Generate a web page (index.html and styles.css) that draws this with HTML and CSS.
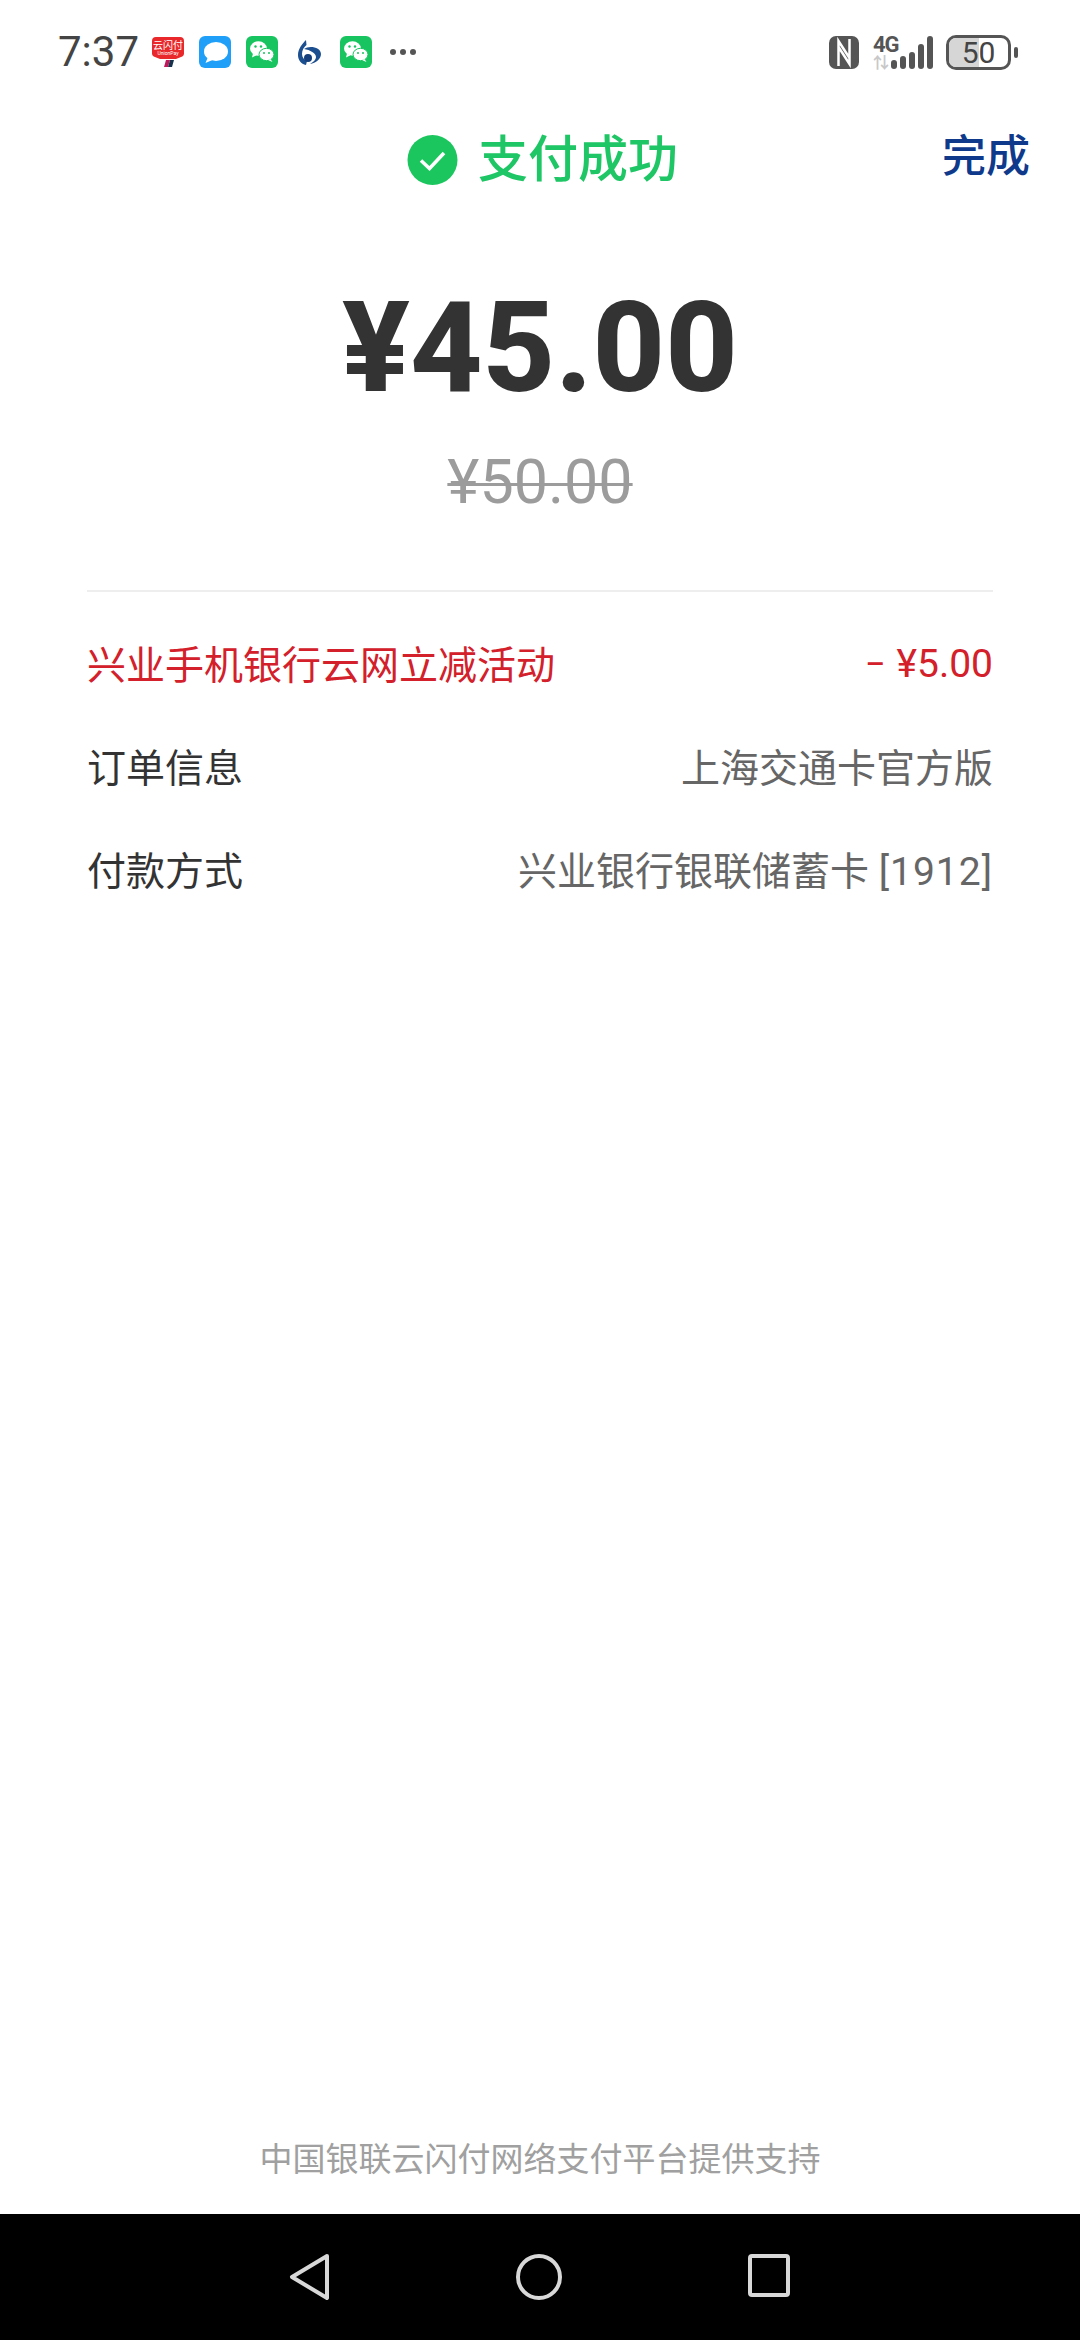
FILE: index.html
```html
<!DOCTYPE html>
<html lang="en">
<head>
    <meta charset="UTF-8">
    <title>支付成功</title>
    <link rel="stylesheet" href="styles.css">
</head>
<body>
    <svg class="defs" width="0" height="0">
        <symbol id="wechat" viewBox="0 0 32 32">
            <rect width="32" height="32" rx="6" fill="#17c45f"/>
            <ellipse cx="12.5" cy="12.5" rx="8.5" ry="7.2" fill="#fff"/>
            <path d="M7 17.500l-1 4 4.500-2.300z" fill="#fff"/>
            <ellipse cx="20.500" cy="18.500" rx="7.500" ry="6.200" fill="#fff" stroke="#17c45f" stroke-width="1"/>
            <path d="M24.500 23l2 3-4-1.800z" fill="#fff"/>
            <circle cx="9.500" cy="10.500" r="1.200" fill="#17c45f"/>
            <circle cx="15" cy="10.500" r="1.200" fill="#17c45f"/>
            <circle cx="18" cy="17" r="1" fill="#17c45f"/>
            <circle cx="23" cy="17" r="1" fill="#17c45f"/>
        </symbol>
    </svg>

    <div class="status-bar">
        <span class="time">7:37</span>
        <div class="notify-icons">
            <svg class="ico" width="32" height="30" viewBox="0 0 32 30">
                <path d="M4 0h24a4 4 0 0 1 4 4v12a4 4 0 0 1-3 4l-5 2H8l-5-2a4 4 0 0 1-3-4V4a4 4 0 0 1 4-4z" fill="#e8282a"/>
                <text x="16" y="12" class="yun-text">云闪付</text>
                <text x="16" y="18" class="yun-small">UnionPay</text>
                <path d="M12 30l2-7h4l-2 7z" fill="#c2185b"/>
                <path d="M16 30l2-7h4l-2 7z" fill="#17324d"/>
            </svg>
            <svg class="ico" width="32" height="32" viewBox="0 0 32 32">
                <rect width="32" height="32" rx="6" fill="#1f9ff7"/>
                <ellipse cx="17" cy="15.500" rx="12" ry="9.500" fill="#fff"/>
                <path d="M9 21l-2.500 6 7-3z" fill="#fff"/>
            </svg>
            <svg class="ico" width="32" height="32"><use href="#wechat"/></svg>
            <svg class="ico bank" width="24" height="25" viewBox="0 0 24 25">
                <path d="M9 0C5 4 1 9 1 15c0 5 3 9 8 10l1-4c-3-1-5-4-5-7 0-4 2-7 4.500-9z" fill="#1c4f8f"/>
                <path d="M7 9c5-4 17-2 17 5 0 5-5 9-11 10 3-2 6-4 6-7 0-4-6-7-12-8z" fill="#1c4f8f"/>
                <circle cx="11" cy="18" r="4" fill="#143f7c"/>
            </svg>
            <svg class="ico" width="32" height="32"><use href="#wechat"/></svg>
            <div class="more-dots"><i></i><i></i><i></i></div>
        </div>
        <div class="system-icons">
            <svg width="30" height="33" viewBox="0 0 30 33">
                <rect width="30" height="33" rx="7" fill="#555"/>
                <path d="M9.500 30V5l11 17M9.500 11l11 17V3" fill="none" stroke="#fff" stroke-width="2.500"/>
            </svg>
            <div class="net">
                <span class="net-label">4G</span>
                <span class="net-arrows">⇅</span>
            </div>
            <div class="signal">
                <i class="s1"></i><i class="s2"></i><i class="s3"></i><i class="s4"></i><i class="s5"></i>
            </div>
            <div class="battery">
                <div class="battery-body">
                    <div class="battery-fill"></div>
                    <span class="battery-num">50</span>
                </div>
                <div class="battery-nub"></div>
            </div>
        </div>
    </div>

    <div class="header">
        <div></div>
        <div class="result">
            <svg width="51" height="50" viewBox="0 0 51 50">
                <circle cx="25.500" cy="25" r="25" fill="#1cc65e"/>
                <path d="M14 25.500l8.500 8L37 18" fill="none" stroke="#fff" stroke-width="3.500"/>
            </svg>
            <span class="result-text">支付成功</span>
        </div>
        <div class="done">完成</div>
    </div>

    <div class="amount">¥45.00</div>
    <div class="origin">¥50.00</div>

    <div class="details">
        <div class="row discount">
            <span>兴业手机银行云网立减活动</span>
            <span class="val-red"><span class="minus">–</span> ¥5.00</span>
        </div>
        <div class="row">
            <span>订单信息</span>
            <span class="val">上海交通卡官方版</span>
        </div>
        <div class="row">
            <span>付款方式</span>
            <span class="val">兴业银行银联储蓄卡 <span class="card-no">[1912]</span></span>
        </div>
    </div>

    <div class="footer-note">中国银联云闪付网络支付平台提供支持</div>

    <div class="nav-bar">
        <svg width="40" height="46" viewBox="0 0 40 46">
            <path d="M38 2L3 23l35 21z" fill="none" stroke="#d8d8d8" stroke-width="4" stroke-linejoin="round"/>
        </svg>
        <svg width="46" height="46" viewBox="0 0 46 46">
            <circle cx="23" cy="23" r="21" fill="none" stroke="#d8d8d8" stroke-width="4"/>
        </svg>
        <svg width="42" height="43" viewBox="0 0 42 43">
            <rect x="2" y="2" width="38" height="39" rx="2" fill="none" stroke="#d8d8d8" stroke-width="4"/>
        </svg>
    </div>
</body>
</html>
```

FILE: styles.css
```css
* {
    box-sizing: border-box;
}

body {
    margin: 0;
    width: 1080px;
    height: 2340px;
    display: flex;
    flex-direction: column;
    background-color: white;
    font-family: Roboto, "Noto Sans CJK SC", sans-serif;
    color: #333;
}

.defs {
    display: none;
}

.status-bar {
    height: 104px;
    padding: 0 62px 0 58px;
    display: flex;
    align-items: center;
    color: #555;
}

.time {
    font-size: 42px;
    line-height: 50px;
    width: 94px;
    color: #444;
}

.notify-icons {
    display: flex;
    align-items: center;
    gap: 15px;
}

.ico {
    display: block;
}

.ico.bank {
    margin: 0 4px;
}

.yun-text {
    font-size: 10px;
    fill: #fff;
    text-anchor: middle;
}

.yun-small {
    font-size: 5px;
    fill: #fff;
    text-anchor: middle;
}

.more-dots {
    display: flex;
    gap: 4px;
    margin-left: 3px;
}

.more-dots i {
    width: 6px;
    height: 6px;
    border-radius: 50%;
    background-color: #555;
}

.system-icons {
    margin-left: auto;
    display: flex;
    align-items: center;
}

.net {
    width: 24px;
    margin-left: 14px;
    display: flex;
    flex-direction: column;
    line-height: 1;
}

.net-label {
    font-size: 22px;
    font-weight: 700;
    line-height: 22px;
    letter-spacing: -1px;
}

.net-arrows {
    font-size: 16px;
    font-weight: 700;
    line-height: 14px;
    color: #c8c8c8;
}

.signal {
    display: flex;
    align-items: flex-end;
    gap: 3px;
    height: 34px;
    margin-left: -6px;
    margin-right: 13px;
}

.signal i {
    width: 6px;
    border-radius: 3px;
    background-color: #555;
}

.s1 { height: 9px; }
.s2 { height: 13px; }
.s3 { height: 17px; }
.s4 { height: 25px; }
.s5 { height: 33px; }

.battery {
    display: flex;
    align-items: center;
    gap: 3px;
}

.battery-body {
    position: relative;
    width: 65px;
    height: 35px;
    border: 3px solid #555;
    border-radius: 10px;
    overflow: hidden;
    display: flex;
    align-items: center;
    justify-content: center;
}

.battery-fill {
    position: absolute;
    left: 0;
    top: 0;
    bottom: 0;
    width: 50%;
    background-color: #d6d6d6;
}

.battery-num {
    position: relative;
    font-size: 30px;
    line-height: 29px;
    color: #444;
}

.battery-nub {
    width: 4px;
    height: 11px;
    border-radius: 2px;
    background-color: #555;
}

.header {
    display: grid;
    grid-template-columns: 1fr auto 1fr;
    align-items: center;
    height: 112px;
    padding: 0 50px 0 55px;
}

.result {
    display: flex;
    align-items: center;
    gap: 20px;
}

.result-text {
    font-size: 50px;
    font-weight: 500;
    line-height: 60px;
    color: #1fc665;
}

.done {
    justify-self: end;
    font-size: 44px;
    font-weight: 500;
    line-height: 56px;
    margin-top: -6px;
    color: #0f3a8c;
}

.amount {
    margin-top: 58px;
    text-align: center;
    font-size: 126px;
    font-weight: 800;
    line-height: 148px;
    color: #333;
}

.origin {
    margin-top: 23px;
    text-align: center;
    font-size: 61px;
    line-height: 74px;
    color: #9c9c9c;
    text-decoration: line-through;
    text-decoration-thickness: 3px;
}

.details {
    margin: 71px 87px 0;
    padding-top: 18px;
    border-top: 2px solid #eeeeee;
}

.row {
    height: 103px;
    display: flex;
    align-items: center;
    justify-content: space-between;
    font-size: 39px;
    color: #333;
}

.val {
    color: #666;
}

.card-no {
    letter-spacing: 1px;
}

.val-red {
    padding-top: 4px;
}

.minus {
    font-size: 30px;
    font-weight: 500;
    vertical-align: 3px;
    margin-right: 2px;
}

.discount {
    color: #d3202a;
}

.footer-note {
    margin-top: auto;
    height: 116px;
    padding-top: 38px;
    text-align: center;
    font-size: 33px;
    line-height: 48px;
    color: #a0a0a0;
}

.nav-bar {
    height: 126px;
    padding: 40px 290px 0 289px;
    background-color: black;
    display: flex;
    align-items: flex-start;
    justify-content: space-between;
}
```
